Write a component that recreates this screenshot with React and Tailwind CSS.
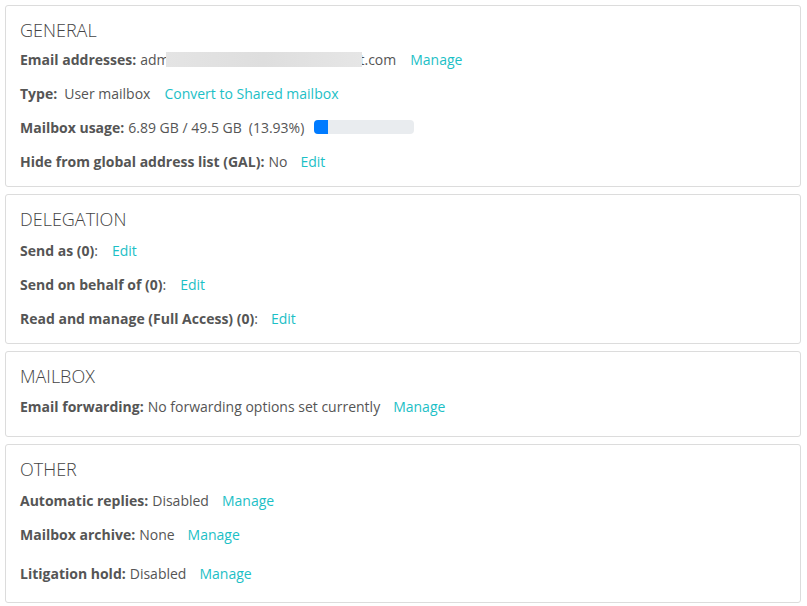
const link = "text-[#1cc0c6] cursor-pointer"

const Card = ({ title, className = "", children }) => (
    <div className={`border border-[#dcdcdc] rounded-[3px] bg-white px-[14px] pt-[11px] ${className}`}>
        <h2 className="text-[18px] leading-[26px] font-light text-[#444]">{title}</h2>
        {children}
    </div>
)

const Row = ({ className = "", children }) => (
    <div className={`flex items-center h-[34px] text-[14px] text-[#555] whitespace-nowrap ${className}`}>
        {children}
    </div>
)

export default function App() {
    return (
        <div
            className="w-[807px] h-[606px] bg-white px-[5px] pt-[5px]"
            style={{ fontFamily: '"Open Sans", "Noto Sans", sans-serif' }}
        >
            <div className="w-[796px] flex flex-col gap-[7px]">
                <Card title="GENERAL" className="pb-[7px]">
                    <Row className="-mt-[1px]">
                        <b className="font-bold">Email addresses:</b>
                        <span className="ml-1">adm</span>
                        <span className="relative z-10 -ml-[3px] inline-block w-[196px] h-[15px] bg-gradient-to-r from-[#e4e4e4] via-[#dedede] to-[#e6e6e6]" />
                        <span className="-ml-[3px]">t.com</span>
                        <span className={`${link} ml-[14px]`}>Manage</span>
                    </Row>
                    <Row>
                        <b className="font-bold">Type:</b>
                        <span className="ml-[7px]">User mailbox</span>
                        <span className={`${link} ml-[14px]`}>Convert to Shared mailbox</span>
                    </Row>
                    <Row>
                        <b className="font-bold">Mailbox usage:</b>
                        <span className="ml-1">6.89 GB / 49.5 GB</span>
                        <span className="ml-[7px]">(13.93%)</span>
                        <div className="ml-[10px] w-[100px] h-[14px] rounded-[4px] bg-[#e9ecef] overflow-hidden">
                            <div className="h-full bg-[#007bff]" style={{ width: "13.93%" }} />
                        </div>
                    </Row>
                    <Row className="mb-[1px]">
                        <b className="font-bold">Hide from global address list (GAL):</b>
                        <span className="ml-1">No</span>
                        <span className={`${link} ml-[13px]`}>Edit</span>
                    </Row>
                </Card>

                <Card title="DELEGATION" className="pb-[8px]">
                    <Row className="mt-[1px]">
                        <b className="font-bold">Send as (0)</b>:
                        <span className={`${link} ml-[14px]`}>Edit</span>
                    </Row>
                    <Row>
                        <b className="font-bold">Send on behalf of (0)</b>:
                        <span className={`${link} ml-[14px]`}>Edit</span>
                    </Row>
                    <Row>
                        <b className="font-bold">Read and manage (Full Access) (0)</b>:
                        <span className={`${link} ml-[13px]`}>Edit</span>
                    </Row>
                </Card>

                <Card title="MAILBOX" className="pb-[13px]">
                    <Row>
                        <b className="font-bold">Email forwarding:</b>
                        <span className="ml-1">No forwarding options set currently</span>
                        <span className={`${link} ml-[13px]`}>Manage</span>
                    </Row>
                </Card>

                <Card title="OTHER" className="pb-[12px]">
                    <Row className="mt-[1px]">
                        <b className="font-bold">Automatic replies:</b>
                        <span className="ml-1">Disabled</span>
                        <span className={`${link} ml-[13px]`}>Manage</span>
                    </Row>
                    <Row>
                        <b className="font-bold">Mailbox archive:</b>
                        <span className="ml-1">None</span>
                        <span className={`${link} ml-[13px]`}>Manage</span>
                    </Row>
                    <Row className="mt-[5px]">
                        <b className="font-bold">Litigation hold:</b>
                        <span className="ml-1">Disabled</span>
                        <span className={`${link} ml-[13px]`}>Manage</span>
                    </Row>
                </Card>
            </div>
        </div>
    )
}
